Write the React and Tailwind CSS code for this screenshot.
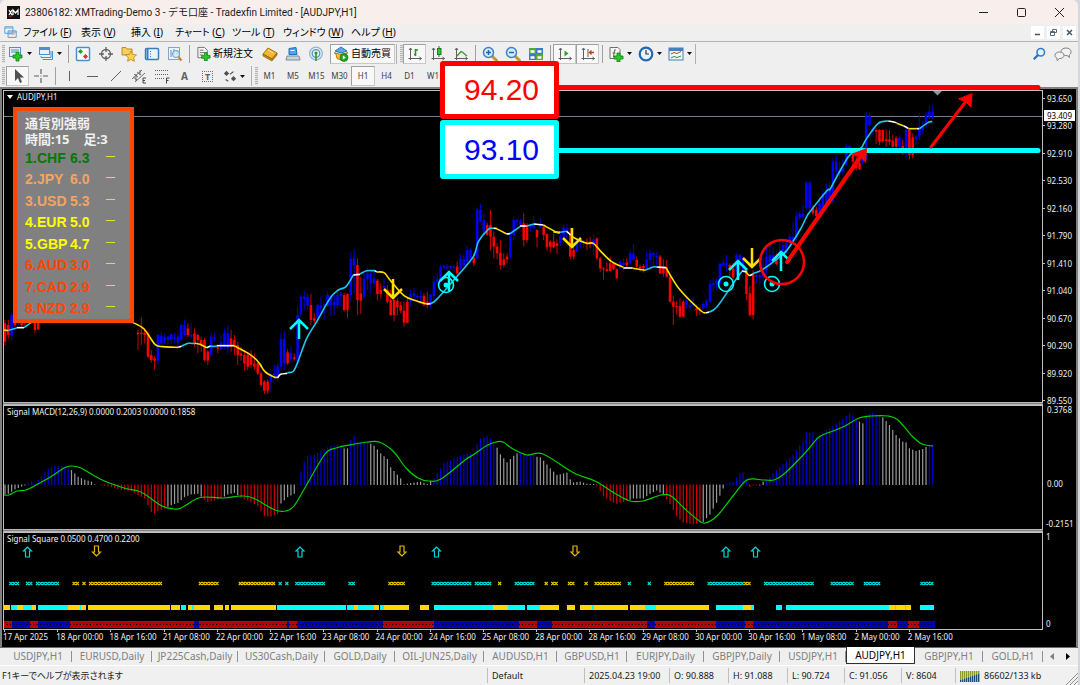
import React from 'react';
import clsx from 'clsx';

const STEP = 3.325;
const barX = (i) => 5 + STEP * i;

// Candles: colour, high, body top, body bottom, low, in thirds of a pixel.
// Each block starts at bar `from`, and `dy` moves it to the top of the price panel.
const CANDLES = [
  { from: 0, dy: 0, bars: 'r 690 700 755 767,r 690 705 735 745,b 670 675 735 752,r 680 690 705 710,b 670 680 700 705,r 680 690 705 712,r 680 690 700 710' },
  { from: 9, dy: 0, bars: 'r 680 690 720 728,r 680 690 718 720' },
  { from: 40, dy: 0, bars: 'r 720 728 733 780,r 682 728 732 765,r 715 728 735 760,r 725 730 800 805,r 780 795 810 818,r 798 805 812 840,b 733 735 812 825,b 725 738 760 765,b 730 740 755 762,b 738 740 750 765,b 730 733 750 762,b 728 742 746 760,b 730 740 757 770,b 700 705 750 755,b 688 705 735 740,r 700 715 735 742,b 698 735 740 745,r 715 730 760 770,r 732 735 750 790,r 740 750 765 785,r 745 750 810 815,r 780 785 812 825,b 730 740 795 800,b 728 742 746 755,r 765 772 776 790,b 735 757 777 780,b 715 730 770 778,b 708 730 775 790,r 720 745 770 785,r 735 750 765 795,r 755 765 795 825,r 770 790 797 812,r 780 795 820 842,r 785 795 830 840,r 780 800 825 835,r 790 820 830 840,r 815 820 850 855' },
  { from: 77, dy: 300, bars: 'r 545 550 585 590,r 570 575 602 612,r 568 575 602 612,b 545 552 575 605,b 525 550 557 570,b 520 530 560 575,b 430 447 530 540,b 422 447 520 540,r 478 487 520 525,b 470 488 508 518,r 490 502 508 512,b 347 375 515 525,b 315 320 372 380,b 303 320 326 360,b 310 320 345 360,r 312 345 390 405,r 370 385 392 400,b 340 345 385 400,b 320 345 355 375,b 340 343 350 390,b 305 315 345 350,b 315 318 348 378,b 310 335 345 375,b 305 315 345 355,b 305 310 318 350,r 308 315 360 365,r 310 312 360 384,b 187 207 315 335,b 178 205 225 310,r 205 225 330 375,r 260 310 332 372,b 250 268 320 325,b 235 250 268 300,b 240 250 280 310,b 245 265 280 285,r 268 272 312 330,r 280 300 312 325,b 265 288 295 305,r 285 300 335 340,r 300 330 375 378,r 325 330 375 395,r 325 332 352 375,r 335 345 362 370,r 335 362 398 410,r 320 335 398 400,b 300 312 335 348,b 295 310 318 335,b 310 318 322 330,b 300 318 322 340,r 310 318 345 350,r 305 335 345 355,b 310 315 345 355,b 258 275 318 330,b 250 268 275 280,b 225 230 270 280,b 225 228 232 240,b 222 230 235 245,b 225 228 235 240,b 225 230 234 245,r 215 230 250 255,b 193 207 235 240,b 193 207 225 232,b 168 180 215 225,b 175 180 205 215,r 190 203 220 228,b 52 60 205 207,b 42 60 95 97,b 68 90 125 135,r 98 105 135 138,r 60 105 140 182,r 125 140 170 205,r 160 170 190 208,r 150 188 225 238,r 190 208 225 232,r 190 200 208 220,b 125 140 200 208,b 80 90 135 152,b 85 90 95 110,b 85 95 110 112,r 70 100 150 170,r 100 108 150 158,b 105 108 112 125,b 78 105 115 118,r 118 120 142 172' },
  { from: 161, dy: 300, bars: 'b 85 105 110 115,r 105 110 135 150,r 130 132 172 182,r 150 155 170 188,r 132 155 172 175,r 148 160 168 192,b 130 138 160 168,b 105 112 140 160,b 102 115 125 155,r 115 130 200 208,r 165 180 200 208,b 145 160 185 187,b 140 150 160 175,b 150 152 158 175,r 145 155 160 180,r 140 155 160 175,b 135 148 165 195,r 142 145 205 210,r 200 205 235 245,r 232 235 238 268,r 215 238 243 245,r 200 220 243 245,r 215 220 238 240,r 235 238 265 268,b 210 215 235 240,b 205 218 225 240,r 205 218 225 235,b 180 190 220 225,b 162 190 210 215,r 200 210 230 235,r 225 230 235 245,r 222 228 235 248,b 183 208 235 240,b 180 188 210 235,b 185 190 195 230,b 185 198 202 230,r 195 200 250 252,r 208 230 250 260,r 210 232 260 262,r 255 260 335 338,r 318 335 350 405,r 332 348 352 375,r 325 348 380 385,r 330 335 380 382,b 325 332 345 355,b 335 345 350 360,b 322 340 345 352,r 345 355 360 378,r 350 358 362 375,b 335 342 355 358,b 328 332 345 355,b 270 283 335 340,b 265 280 285 305,b 265 272 282 300,b 218 222 280 285,b 208 218 225 230,b 195 218 225 245,r 220 225 240 260,r 220 235 262 270,b 190 195 245 255,b 190 195 210 225,b 200 205 240 245,r 235 240 312 330,r 288 310 375 380,r 240 250 375 388,b 245 255 260 278,b 240 255 260 285,b 195 240 260 275,b 165 200 240 250,b 160 195 225 235,b 170 195 205 215,r 190 205 222 225,b 155 185 205 215,b 150 165 190 200,b 155 160 180 190,b 130 140 160 170,b 97 140 155 165,b 65 80 140 150,b 65 72 82 90,b 45 72 80 85' },
  { from: 241, dy: -30, bars: 'b 303 308 385 390,b 303 308 385 400,r 375 385 400 405,r 380 390 408 415,b 355 370 410 412,b 330 340 385 390,b 310 330 370 385,b 305 330 360 365,b 235 245 365 370,b 225 245 272 290,b 245 270 280 298,b 238 265 275 283,b 190 200 255 260,b 195 198 215 225,r 205 220 245 270,r 225 245 265 272,r 230 248 268 270,b 210 220 248 255,b 95 105 238 240,b 98 105 135 142,b 140 145 155 165,r 145 150 155 192,r 148 150 185 195,r 148 150 183 188,r 148 178 183 200,r 150 178 185 195,r 165 182 200 205,r 168 175 200 205,b 165 172 200 205,r 180 198 210 225,b 140 150 210 235,r 145 150 225 238,r 160 172 225 235,b 165 170 178 195,b 100 140 170 180,b 125 140 150 158,b 95 105 130 145,b 78 95 110 118,b 75 95 110 118' },
];

// Moving average: colour followed by its points, in the same units as the candles
const AVERAGE = [
  { dx: 0, dy: 0, runs: 'y 12,720 25,722|c 25,721 50,714|w 50,713 72,713|c 72,713 90,700 110,690|y 398,697 432,717 465,763 490,770 535,772|w 535,772 545,769|c 545,768 565,760 585,761|y 585,760 600,763 620,773|w 620,773 632,768|c 630,769 650,769|w 650,767 702,767|y 702,767 745,790 770,810 785,830' },
  { dx: 780, dy: 300, runs: 'y 0,522 15,545 40,560 53,563|w 53,563 62,553 82,550|c 82,548 100,544 115,512 140,445 170,395 210,325 235,300 258,290 280,255|w 280,255 300,253|c 300,252 320,242 345,242|w 345,242 350,246|y 350,246 372,248 390,270 432,317 470,333 500,342|w 500,342 512,341|c 512,341 530,328 590,260 640,200 655,155 685,118 700,115|w 700,115 710,115|y 708,115 740,132|w 740,132 750,131|c 750,131 780,110|w 780,108 800,108|c 800,108 822,102|w 822,102 850,105|y 850,105 890,127 900,127' },
  { dx: 1620, dy: 300, runs: 'y 40,126 60,127|c 60,127 80,124|w 80,124 92,135|y 92,135 105,145 140,160 160,160 185,187 215,215 250,232|w 250,234 278,234|y 278,235 315,241|c 315,241 340,231 350,231|w 350,231 378,233|y 378,233 418,297 480,360 497,369|w 497,369 507,366|c 507,366 530,352 580,280 605,245|w 605,243 620,245|y 617,245 628,257|w 628,257 638,253|c 636,252 665,240 705,212 740,182' },
  { dx: 2340, dy: -30, runs: 'c 0,530 20,512 60,450 80,410 90,395 140,333 150,328 165,300 205,230 230,212 245,202 260,175 295,130 325,123|w 325,123 350,128|y 350,130 370,137|w 370,137 385,145|y 385,146 410,146|w 410,146 418,146|c 418,146 445,127 457,125' },
];

const LINE_COLORS = { y: '#ffe000', c: '#1cc8f0', w: '#ffffff' };

// MACD histogram: [bar, height in thirds of a pixel], linear in between
const MACD = [
  [0, -30], [1, -28], [3, -15], [5, -6], [6, -3], [7, 6], [8, 12], [9, 3], [11, 27], [13, 50], [15, 58], [18, 55], [20, 45], [22, 25], [24, 16], [26, 10], [27, 2],
  [29, -2], [32, -8], [35, -16], [38, -20], [40, -32], [42, -42], [43, -62], [44, -82], [45, -88], [46, -80], [48, -72], [50, -62], [52, -55], [54, -38], [56, -30],
  [58, -28], [60, -45], [61, -53], [65, -42], [67, -30], [69, -25], [71, -40], [73, -48], [76, -65], [78, -95], [80, -97], [82, -88], [83, -57], [85, -38], [87, -28],
  [88, 3], [89, 40], [90, 70], [91, 88], [93, 90], [96, 108], [98, 118], [101, 120], [102, 110], [103, 110], [104, 135], [105, 148], [106, 130], [109, 130], [111, 118],
  [113, 95], [115, 78], [116, 53], [119, 20], [120, 2], [122, 6], [125, 10], [127, 3], [129, 20], [132, 65], [135, 80], [139, 95], [141, 95], [142, 122], [143, 140],
  [145, 148], [147, 130], [148, 112], [149, 92], [151, 68], [153, 88], [154, 95], [158, 88], [161, 83], [162, 73], [164, 50], [166, 30], [169, 37], [170, 17], [171, 8],
  [173, 10], [175, 4], [177, 3], [178, -5], [180, -35], [182, -50], [184, -58], [187, -50], [189, -42], [192, -42], [194, -28], [196, -18], [198, -30], [200, -58],
  [202, -95], [204, -114], [207, -120], [210, -112], [212, -90], [214, -55], [216, -12], [217, 3], [219, 10], [221, 35], [222, 38], [223, 20], [224, -8], [225, -3],
  [227, -3], [228, 10], [230, 25], [232, 45], [235, 73], [237, 90], [239, 120], [240, 130], [241, 157], [243, 158], [244, 145], [247, 163], [250, 185], [252, 198],
  [254, 215], [255, 208], [257, 190], [258, 185], [259, 210], [261, 217], [264, 203], [266, 180], [268, 150], [270, 130], [271, 128], [272, 110], [274, 102], [276, 108],
  [278, 120], [279, 123],
];

const MACD_RUNS = [
  [6, 'g'], [19, 'b'], [28, 'g'], [48, 'r'], [59, 'g'], [65, 'r'], [70, 'g'], [82, 'r'], [87, 'g'], [101, 'b'], [103, 'g'], [109, 'b'], [128, 'g'], [147, 'b'],
  [154, 'g'], [159, 'b'], [177, 'g'], [187, 'r'], [198, 'g'], [209, 'r'], [216, 'g'], [223, 'b'], [226, 'r'], [228, 'g'], [256, 'b'], [258, 'g'], [263, 'b'],
  [277, 'g'], [279, 'b'],
];
const MACD_COLORS = { g: '#9a9a9a', b: '#0000d8', r: '#d00000' };

const MACD_SIGNAL =
  '4,494 9,494 17,490 26,489 38,483 52,475 64,467 71,465 81,467 100,478 124,487 138,490 146,494 162,505 174,508 181,507 196,498 205,496 224,497 241,495 253,497 275,509 286,510 294,505 306,485 325,453 336,447 355,443 368,441 379,441 393,450 406,467 418,477 429,480 441,478 465,459 473,454 486,445 496,441 503,441 513,448 527,454 543,453 574,472 595,480 616,493 630,500 643,500 661,494 671,495 685,508 698,519 705,522 717,515 733,495 747,479 764,479 774,479 784,473 805,452 819,436 833,430 845,425 859,417 871,415 888,415 898,419 912,435 922,443 933,445';

// Cross marks of the square indicator: [colour, first bar, last bar]
const CROSSES = [
  ['c', 2, 4], ['c', 7, 8], ['c', 10, 16], ['y', 21, 22], ['y', 24, 24], ['y', 26, 47], ['y', 59, 64], ['y', 71, 81], ['c', 83, 83], ['c', 85, 85], ['c', 88, 96],
  ['c', 104, 105], ['y', 116, 120], ['c', 129, 140], ['c', 142, 146], ['y', 149, 149], ['c', 154, 159], ['y', 163, 163], ['y', 165, 166], ['y', 170, 171],
  ['y', 175, 175], ['y', 178, 185], ['c', 188, 188], ['c', 194, 194], ['y', 199, 207], ['c', 212, 222], ['y', 223, 224], ['c', 229, 243], ['c', 249, 255],
  ['c', 259, 263], ['c', 276, 279],
];

const BANDS = [
  ['y', 4, 10], ['c', 11, 17], ['y', 17, 23], ['c', 23, 32], ['y', 32, 36], ['c', 38, 68], ['y', 68, 80], ['c', 80, 81], ['y', 81, 86], ['y', 88, 170],
  ['y', 171, 180], ['c', 181, 186], ['y', 188, 192], ['c', 192, 194], ['y', 194, 210], ['y', 214, 223], ['y', 225, 229], ['y', 231, 276], ['c', 277, 346],
  ['c', 347, 354], ['y', 354, 358], ['c', 358, 374], ['y', 374, 379], ['c', 380, 384], ['y', 384, 409], ['y', 420, 429], ['c', 434, 493], ['y', 493, 508],
  ['c', 508, 525], ['c', 527, 540], ['y', 540, 559], ['y', 567, 575], ['y', 580, 592], ['c', 592, 594], ['y', 594, 628], ['y', 630, 645], ['c', 645, 656],
  ['y', 656, 709], ['c', 716, 743], ['y', 743, 751], ['c', 751, 754], ['c', 776, 782], ['c', 786, 889], ['y', 889, 895], ['c', 895, 896], ['y', 896, 905],
  ['c', 905, 906], ['y', 906, 911], ['c', 920, 934],
];

const RED_SQUARES = [
  [4, 12], [30, 38], [70, 194], [199, 287], [289, 297], [383, 434], [519, 537], [552, 647], [655, 716], [745, 753], [888, 897], [908, 919],
];

const PRICES = ['93.650', '93.280', '92.910', '92.530', '92.160', '91.790', '91.410', '91.040', '90.670', '90.290', '89.920', '89.550'];

const TIMES = [
  '17 Apr 2025', '18 Apr 00:00', '18 Apr 16:00', '21 Apr 08:00', '22 Apr 00:00', '22 Apr 16:00', '23 Apr 08:00', '24 Apr 00:00', '24 Apr 16:00',
  '25 Apr 08:00', '28 Apr 00:00', '28 Apr 16:00', '29 Apr 08:00', '30 Apr 00:00', '30 Apr 16:00', '1 May 08:00', '2 May 00:00', '2 May 16:00',
];

const STRENGTH = [
  { rank: 1, code: 'CHF', value: '6.3', color: 'text-[#007a00]' },
  { rank: 2, code: 'JPY', value: '6.0', color: 'text-[#f4a460]' },
  { rank: 3, code: 'USD', value: '5.3', color: 'text-[#f4a460]' },
  { rank: 4, code: 'EUR', value: '5.0', color: 'text-[#ffff00]' },
  { rank: 5, code: 'GBP', value: '4.7', color: 'text-[#ffff00]' },
  { rank: 6, code: 'AUD', value: '3.0', color: 'text-[#ff4500]' },
  { rank: 7, code: 'CAD', value: '2.9', color: 'text-[#ff4500]' },
  { rank: 8, code: 'NZD', value: '2.9', color: 'text-[#ff4500]' },
];

const MENU = [
  { label: 'ファイル', key: 'F', width: 'w-[58px]' },
  { label: '表示', key: 'V', width: 'w-[50px]' },
  { label: '挿入', key: 'I', width: 'w-[44px]' },
  { label: 'チャート', key: 'C', width: 'w-[57px]' },
  { label: 'ツール', key: 'T', width: 'w-[51px]' },
  { label: 'ウィンドウ', key: 'W', width: 'w-[68px]' },
  { label: 'ヘルプ', key: 'H', width: 'w-[50px]' },
];

const TABS = [
  { name: 'USDJPY,H1', width: 'w-[68px]' },
  { name: 'EURUSD,Daily', width: 'w-[80px]' },
  { name: 'JP225Cash,Daily', width: 'w-[86px]' },
  { name: 'US30Cash,Daily', width: 'w-[87px]' },
  { name: 'GOLD,Daily', width: 'w-[70px]' },
  { name: 'OIL-JUN25,Daily', width: 'w-[89px]' },
  { name: 'AUDUSD,H1', width: 'w-[73px]' },
  { name: 'GBPUSD,H1', width: 'w-[70px]' },
  { name: 'EURJPY,Daily', width: 'w-[77px]' },
  { name: 'GBPJPY,Daily', width: 'w-[76px]' },
  { name: 'USDJPY,H1', width: 'w-[66px]' },
  { name: 'AUDJPY,H1', width: 'w-[69px]', active: true },
  { name: 'GBPJPY,H1', width: 'w-[68px]' },
  { name: 'GOLD,H1', width: 'w-[60px]' },
];

const TIMEFRAMES = ['M1', 'M5', 'M15', 'M30', 'H1', 'H4', 'D1', 'W1', 'MN'];

function macdAt(i) {
  const next = MACD.findIndex(([bar]) => bar >= i);
  if (MACD[next][0] === i) return MACD[next][1];
  const [i0, v0] = MACD[next - 1];
  const [i1, v1] = MACD[next];
  return v0 + ((v1 - v0) * (i - i0)) / (i1 - i0);
}

// Catmull-Rom curve through the points
function smoothPath(list) {
  const pts = list.split(' ').map((p) => p.split(',').map(Number));
  let d = `M${pts[0]}`;
  for (let i = 0; i < pts.length - 1; i += 1) {
    const [p0, p1, p2, p3] = [pts[i - 1] || pts[i], pts[i], pts[i + 1], pts[i + 2] || pts[i + 1]];
    d += `C${p1[0] + (p2[0] - p0[0]) / 6},${p1[1] + (p2[1] - p0[1]) / 6} ${p2[0] - (p3[0] - p1[0]) / 6},${p2[1] - (p3[1] - p1[1]) / 6} ${p2}`;
  }
  return d;
}

/* ---------- toolbar parts ---------- */

function Icon({ children, size = 16 }) {
  return (
    <svg width={size} height={size} viewBox="0 0 16 16" fill="none" className="shrink-0" aria-hidden="true">
      {children}
    </svg>
  );
}

function Caret() {
  return (
    <svg width="5" height="3" viewBox="0 0 5 3" className="shrink-0" aria-hidden="true">
      <path d="M0 0h5L2.5 3z" fill="#111" />
    </svg>
  );
}

function Sep() {
  return <span className="mr-0.5 ml-[3px] h-[18px] w-px shrink-0 bg-[#a0a0a0]" />;
}

function Grip() {
  return <span className="h-[18px] w-[3px] shrink-0 bg-[repeating-linear-gradient(180deg,#b4b4b4_0_1px,#e4e4e4_1px_2px)]" />;
}

function Tool({ label, pressed, caret, children }) {
  return (
    <button
      type="button"
      aria-label={label}
      className={clsx(
        'flex h-5 shrink-0 items-center justify-center',
        caret ? 'w-[30px] gap-[3px]' : 'w-[23px]',
        pressed && 'border border-[#c8c8c8] border-t-[#a0a0a0] border-l-[#a0a0a0] bg-[#f8f8f8]',
      )}
    >
      {children}
      {caret && <Caret />}
    </button>
  );
}

const Plus = ({ x = 8, y = 8 }) => (
  <path d={`M${x + 2} ${y}h3v3h3v3h-3v3h-3v-3h-3v-3h3z`} fill="#2fc52f" stroke="#0b7d0b" strokeWidth=".8" />
);

const Axes = ({ children }) => (
  <Icon>
    <path d="M3.500 2v12M1.500 12.500h13M2 4l1.500-2L5 4M12.500 11l2 1.500-2 1.500" stroke="#606060" />
    {children}
  </Icon>
);

const Lens = ({ minus }) => (
  <Icon>
    <path d="M10 10l4.500 4.500" stroke="#c8962a" strokeWidth="3" strokeLinecap="round" />
    <circle cx="6.500" cy="6.500" r="5" fill="#d5ebfb" stroke="#3a83c8" strokeWidth="1.500" />
    <path d={minus ? 'M4 6.500h5' : 'M4 6.500h5M6.500 4v5'} stroke="#1c66b0" strokeWidth="1.500" />
  </Icon>
);

function TitleBar() {
  return (
    <header className="flex h-6 items-center bg-[#f8efed] text-[#1a1a1a]">
      <svg width="13" height="13" viewBox="0 0 13 13" className="ml-[7px]" aria-hidden="true">
        <rect width="13" height="13" fill="#111" />
        <path d="M2 4l3 5M5 4L2 9M6 9V4l2.500 3L11 4v5" stroke="#fff" fill="none" strokeWidth="1.200" />
        <path d="M2 10.500l4-1" stroke="#e02020" />
      </svg>
      <h1 className="ml-[5px] font-['Roboto','Noto_Sans_CJK_JP',sans-serif] text-[10px] whitespace-nowrap">23806182: XMTrading-Demo 3 - デモ口座 - Tradexfin Limited - [AUDJPY,H1]</h1>
      <div className="ml-auto flex">
        <button type="button" aria-label="最小化" className="flex h-6 w-[38px] items-center justify-center">
          <svg width="9" height="9" stroke="#222"><path d="M0 4.500h9" /></svg>
        </button>
        <button type="button" aria-label="最大化" className="flex h-6 w-[38px] items-center justify-center">
          <svg width="9" height="9" fill="none" stroke="#222"><rect x=".5" y=".5" width="8" height="8" rx="1" /></svg>
        </button>
        <button type="button" aria-label="閉じる" className="flex h-6 w-[38px] items-center justify-center">
          <svg width="9" height="9" stroke="#222"><path d="M0 0l9 9M9 0L0 9" /></svg>
        </button>
      </div>
    </header>
  );
}

function MenuBar() {
  return (
    <nav className="flex h-[18px] items-center border-b border-[#b4b4b4] bg-[#efefef] pl-1">
      <Icon size={13}>
        <path d="M1 1h10v8H1zM5 6h10v8H5z" fill="#eaf4fd" stroke="#5b9bd5" strokeWidth="1.200" />
        <path d="M6.500 11l2-2 2 2 3-2" stroke="#e08030" />
        <path d="M1 2.500h10M5 7.500h10" stroke="#5b9bd5" />
      </Icon>
      <div className="ml-[6px] flex text-[10px] [font-feature-settings:'palt']">
        {MENU.map((item) => (
          <button key={item.key} type="button" className={clsx('text-left whitespace-nowrap', item.width)}>
            {item.label} (<u>{item.key}</u>)
          </button>
        ))}
      </div>
      <div className="mr-0.5 ml-auto flex gap-[3px]">
        <button type="button" aria-label="チャートを最小化" className="flex h-[13px] w-[13px] items-center justify-center bg-white">
          <svg width="7" height="7" stroke="#456"><path d="M1 5.500h5" strokeWidth="1.500" /></svg>
        </button>
        <button type="button" aria-label="チャートを元に戻す" className="flex h-[13px] w-[13px] items-center justify-center bg-white">
          <svg width="7" height="7" fill="none" stroke="#567"><path d="M2.500 2V.5h4v3H5M.5 2.500h4v4h-4zM.5 3.500h4" /></svg>
        </button>
        <button type="button" aria-label="チャートを閉じる" className="flex h-[13px] w-[13px] items-center justify-center bg-white">
          <svg width="7" height="7" stroke="#456"><path d="M1 1l5 5M6 1L1 6" strokeWidth="1.500" /></svg>
        </button>
      </div>
    </nav>
  );
}

function StandardToolbar() {
  return (
    <div className="flex h-[23px] items-center pl-0.5">
      <Grip />
      <Tool label="新規チャート" caret>
        <Icon>
          <rect x="1.500" y="1.500" width="11" height="9" fill="#e4f1fc" stroke="#4d8fcc" />
          <path d="M3 4h8M3 6h5" stroke="#4d8fcc" />
          <Plus x={6} y={6} />
        </Icon>
      </Tool>
      <Tool label="チャートの組表示" caret>
        <Icon>
          <rect x="1.500" y="1.500" width="10" height="7" fill="#e4f1fc" stroke="#4d8fcc" />
          <path d="M2 3h9" stroke="#4d8fcc" strokeWidth="2" />
          <path d="M14.500 5v8.500H4.500M13 5v6.500H3V10" stroke="#4d8fcc" />
        </Icon>
      </Tool>
      <Sep />
      <Tool label="気配値表示">
        <Icon>
          <rect x="1.500" y="1.500" width="13" height="13" rx="1" fill="#fff" stroke="#4d8fcc" strokeWidth="1.500" />
          <path d="M5.500 3l2.500 2.500L5.500 8 3 5.500z" fill="#25a025" />
          <path d="M10.500 8l2.500 2.500-2.500 2.500L8 10.500z" fill="#e03020" />
        </Icon>
      </Tool>
      <Tool label="データウィンドウ">
        <Icon>
          <circle cx="8" cy="8" r="4.500" stroke="#606060" strokeWidth="1.300" />
          <path d="M8 1v5M8 10v5M1 8h5M10 8h5" stroke="#606060" strokeWidth="1.300" />
        </Icon>
      </Tool>
      <Tool label="ナビゲーター">
        <Icon>
          <path d="M1 3V1.500h4L6 3h5v6H1z" fill="#f6cf63" stroke="#c08a20" />
          <path d="M10 5l1.700 3.400 3.800.5-2.800 2.600.7 3.800L10 13.500l-3.400 1.800.7-3.800-2.800-2.600 3.800-.5z" fill="#fbd34a" stroke="#b98010" strokeWidth=".8" />
        </Icon>
      </Tool>
      <Tool label="ターミナル">
        <Icon>
          <rect x="1.500" y="2.500" width="13" height="11" rx="1" fill="#e9f3fc" stroke="#3a7cc0" strokeWidth="1.500" />
          <path d="M3.500 3v10" stroke="#3a7cc0" strokeWidth="2" />
          <path d="M6 5.500h1M6 8h1M6 10.500h1" stroke="#3a7cc0" />
        </Icon>
      </Tool>
      <Tool label="ストラテジーテスター">
        <Icon>
          <rect x="1.500" y="1.500" width="11" height="12" fill="#edf4fb" stroke="#8aa5c0" />
          <path d="M4 4v7M7 3v6M10 4v5" stroke="#4d8fcc" />
          <circle cx="9" cy="8" r="3.500" fill="#d5ebfb" fillOpacity=".7" stroke="#6a9cc8" />
          <path d="M11.500 11l3 3.500" stroke="#c8862a" strokeWidth="2.200" />
        </Icon>
      </Tool>
      <Sep />
      <button type="button" className="flex h-5 w-[66px] shrink-0 items-center gap-[2px] pl-1 text-[10px] whitespace-nowrap">
        <Icon size={15}>
          <path d="M2 1.500h7l3 3v8H2z" fill="#f6f6f6" stroke="#707070" />
          <path d="M4 4.500h4M4 7h5M4 9.500h3" stroke="#707070" />
          <Plus x={7} y={7} />
        </Icon>
        新規注文
      </button>
      <Tool label="メタエディター">
        <Icon>
          <path d="M6 2l9 5-5 6-9-5z" fill="#f2b632" stroke="#a87410" />
          <path d="M1 8v2l9 5 5-6V7l-5 6z" fill="#c98a18" stroke="#8a5a08" strokeWidth=".7" />
          <path d="M6 4l5 3" stroke="#ffe59a" />
        </Icon>
      </Tool>
      <Tool label="ライブ口座">
        <Icon>
          <path d="M4 2.500l7-1 1 7H4z" fill="#4aa6ee" stroke="#1d6fb8" />
          <path d="M5.500 4.500h4" stroke="#fff" />
          <path d="M2 10h12l1 4H1z" fill="#c9d3de" stroke="#7d8b9a" />
        </Icon>
      </Tool>
      <Tool label="シグナル">
        <Icon>
          <circle cx="8" cy="7.500" r="6.300" stroke="#8fb4d8" strokeWidth="1.300" />
          <circle cx="8" cy="7.500" r="3.800" stroke="#5b93c8" strokeWidth="1.300" />
          <circle cx="8" cy="7" r="1.600" fill="#2a9a2a" />
          <path d="M8 8v7" stroke="#2a9a2a" strokeWidth="1.600" />
        </Icon>
      </Tool>
      <button
        type="button"
        className="ml-[3px] flex h-5 w-[65px] shrink-0 items-center gap-[2px] border border-[#c8c8c8] border-t-[#a0a0a0] border-l-[#a0a0a0] bg-[#f8f8f8] pl-0.5 text-[10px] whitespace-nowrap"
      >
        <Icon>
          <path d="M2 5l6-4 6 4-6 2z" fill="#5aaae8" stroke="#2a76b8" />
          <path d="M1 6.500l7 2 7-2-2 1.500-1 4.500-4 1.500-4-1.500L3 8z" fill="#f4c33a" stroke="#b98010" />
          <circle cx="11" cy="11.500" r="4" fill="#22a522" stroke="#0c700c" strokeWidth=".6" />
          <path d="M9.800 9.500v4l3-2z" fill="#fff" />
        </Icon>
        自動売買
      </button>
      <span className="mr-[3px] ml-px h-5 w-px bg-[#b0b0b0]" />
      <Grip />
      <Tool label="バーチャート" pressed>
        <Axes><path d="M8.500 3v7M8.500 8.500H7M8.500 4H11" stroke="#1f9a1f" strokeWidth="1.600" /></Axes>
      </Tool>
      <Tool label="ローソク足">
        <Axes><path d="M9 0v11" stroke="#1f7a1f" /><rect x="7.500" y="2.500" width="3.500" height="6" fill="#35c435" stroke="#1f7a1f" /></Axes>
      </Tool>
      <Tool label="ラインチャート">
        <Axes><path d="M4 10l4-4.500 2 1 4 3.500" stroke="#2aa02a" strokeWidth="1.300" /></Axes>
      </Tool>
      <Sep />
      <Tool label="ズームイン"><Lens /></Tool>
      <Tool label="ズームアウト"><Lens minus /></Tool>
      <Tool label="整列">
        <Icon>
          <rect x="1" y="2" width="7" height="6" fill="#52a832" />
          <rect x="8" y="2" width="7" height="6" fill="#3a78c8" />
          <rect x="1" y="8" width="7" height="6" fill="#3a78c8" />
          <rect x="8" y="8" width="7" height="6" fill="#52a832" />
          <path d="M2.500 5.500h4M9.500 5.500h4M2.500 11.500h4M9.500 11.500h4" stroke="#fff" strokeWidth="2.500" />
        </Icon>
      </Tool>
      <Sep />
      <Tool label="自動スクロール" pressed>
        <Axes><path d="M7.500 4.500v6l4-3z" fill="#2aa52a" /></Axes>
      </Tool>
      <Tool label="チャートシフト" pressed>
        <Axes><path d="M8 3v8" stroke="#606060" /><path d="M14 6.500h-4M11.500 4.500l-2 2 2 2" stroke="#c04010" strokeWidth="1.300" /></Axes>
      </Tool>
      <Sep />
      <Tool label="インディケータ" caret>
        <Icon>
          <path d="M2 1.500h8l2 2v9H2z" fill="#f6f6f6" stroke="#707070" />
          <path d="M8 4H6.500L5.500 11M4.500 7h3" stroke="#606060" />
          <Plus x={7} y={7} />
        </Icon>
      </Tool>
      <Tool label="時間足設定" caret>
        <Icon>
          <circle cx="8" cy="8" r="6.300" fill="#eaf4ff" stroke="#2566b0" strokeWidth="2.200" />
          <path d="M8 4v4h3" stroke="#333" strokeWidth="1.200" />
        </Icon>
      </Tool>
      <Tool label="定型チャート" caret>
        <Icon>
          <rect x="1" y="2" width="14" height="12" fill="#eef6fd" stroke="#4380bd" />
          <path d="M1 3.500h14" stroke="#4380bd" strokeWidth="3" />
          <path d="M3 8l3-1.500 3 1 4-2" stroke="#c04030" />
          <path d="M3 12l3-1.500 3 1 4-1.500" stroke="#2a9a2a" />
        </Icon>
      </Tool>
      <span className="h-5 w-px bg-[#b0b0b0]" />
      <div className="mr-1.5 ml-auto flex items-center gap-2">
        <button type="button" aria-label="検索">
          <Icon size={14}>
            <circle cx="10" cy="6" r="4.300" stroke="#2f7fd0" strokeWidth="1.800" />
            <path d="M7 9l-5 5" stroke="#2f6fc0" strokeWidth="2.500" />
          </Icon>
        </button>
        <button type="button" aria-label="チャット">
          <svg width="18" height="14" viewBox="0 0 18 14" fill="#f2f2f2" stroke="#808080" aria-hidden="true">
            <path d="M12 1c3 0 5 1.500 5 3.800S15.500 8 15 8l.5 2.500L13 8.500c-4 .3-6-1.500-6-3.700S9 1 12 1z" />
            <path d="M5.500 5C8 5 10 6.300 10 8.300s-2 3.200-4.500 3.200L3 13.500v-2.300C1.500 10.500 1 9.500 1 8.300 1 6.300 3 5 5.500 5z" />
          </svg>
        </button>
      </div>
    </div>
  );
}

function LineToolbar() {
  return (
    <div className="flex h-[22px] items-center pl-0.5">
      <Grip />
      <span className="w-px" />
      <Tool label="カーソル" pressed>
        <Icon><path d="M5 1v12l3-3 2 5 2-1-2-4.500h4z" fill="#505050" /></Icon>
      </Tool>
      <Tool label="十字カーソル">
        <Icon><path d="M8 1v5M8 10v5M1 8h5M10 8h5M7.500 8h1" stroke="#606060" strokeWidth="1.200" /></Icon>
      </Tool>
      <Sep />
      <Tool label="垂直線"><Icon><path d="M7.500 3v10" stroke="#606060" /></Icon></Tool>
      <Tool label="水平線"><Icon><path d="M2 8.500h11" stroke="#606060" /></Icon></Tool>
      <Tool label="トレンドライン"><Icon><path d="M3 13L13 3" stroke="#606060" /></Icon></Tool>
      <Tool label="等距離チャネル">
        <Icon><path d="M1 11l10-9M4 14L14 5M3 6l4 3M6 4l4 3M2 9l4 3M9 2v5M5 6v7" stroke="#606060" strokeWidth=".9" /><path d="M15 10h-3v5h3M12 12.500h2" stroke="#444" /></Icon>
      </Tool>
      <Tool label="フィボナッチ">
        <Icon><path d="M1 2.500h14M1 6.500h14M1 10.500h10" stroke="#606060" strokeDasharray="1 1" /><path d="M15.500 10h-3v5.500M12.500 12.500h2" stroke="#444" /></Icon>
      </Tool>
      <button type="button" className="h-5 w-[23px] text-[10px] font-bold text-[#606060]">A</button>
      <button type="button" className="flex h-5 w-[23px] items-center justify-center">
        <span className="h-[11px] w-[11px] border border-dotted border-[#707070] text-[9px] leading-[9px] font-bold text-[#606060]">T</span>
      </button>
      <Tool label="矢印" caret>
        <Icon size={14}>
          <path d="M4 2l3 3-3 3-3-3zM12 8l3 3-3 3-3-3z" fill="#505050" />
          <path d="M3 12l3 2M8 6l4-3" stroke="#505050" strokeWidth="1.300" />
        </Icon>
      </Tool>
      <span className="mr-[3px] ml-0.5 h-5 w-px bg-[#b0b0b0]" />
      <Grip />
      {TIMEFRAMES.map((tf, n) => (
        <button
          key={tf}
          type="button"
          className={clsx(
            'h-5 shrink-0 text-center text-[8px] text-[#404040]',
            n % 3 === 1 ? 'w-6' : 'w-[23px]',
            tf === 'H1' && 'border border-[#c8c8c8] border-t-[#a0a0a0] border-l-[#a0a0a0] bg-[#f8f8f8]',
          )}
        >
          {tf}
        </button>
      ))}
    </div>
  );
}

/* ---------- chart ---------- */

function Candles() {
  return CANDLES.map(({ from, dy, bars }) =>
    bars.split(',').map((bar, n) => {
      const [side, ...values] = bar.split(' ');
      const [high, top, bottom, low] = values.map((v) => 90 + (Number(v) + dy) / 3);
      const x = barX(from + n);
      const color = side === 'r' ? '#ff0000' : '#0000ff';
      return (
        <g key={from + n} fill={color}>
          <rect x={x - 0.5} y={high} width="1" height={low - high} opacity=".8" />
          <rect x={x - 1.25} y={top} width="2.5" height={Math.max(bottom - top, 1)} />
        </g>
      );
    }),
  );
}

function Average() {
  return AVERAGE.map(({ dx, dy, runs }) =>
    runs.split('|').map((run) => {
      const [color, ...points] = run.split(' ');
      const path = points.map((p) => {
        const [x, y] = p.split(',').map(Number);
        return `${(x + dx) / 3},${90 + (y + dy) / 3}`;
      });
      return <path key={`${dx}-${run}`} d={smoothPath(path.join(' '))} fill="none" stroke={LINE_COLORS[color]} strokeWidth="1.600" />;
    }),
  );
}

function SignalArrow({ x, y, down }) {
  return (
    <path
      d={down ? `M${x} ${y - 10}v19M${x - 9} ${y}l9 9 9-9` : `M${x} ${y + 10}v-19M${x - 9} ${y}l9-9 9 9`}
      fill="none"
      stroke={down ? '#ffe000' : '#00ffff'}
      strokeWidth="2.500"
    />
  );
}

function Target({ x, y }) {
  return (
    <g>
      <circle cx={x} cy={y} r="7.500" fill="none" stroke="#00ffff" strokeWidth="1.600" />
      <circle cx={x} cy={y} r="2.500" fill="#00ffff" />
    </g>
  );
}

function StrengthPanel() {
  return (
    <div className="absolute top-4 left-[9px] h-[216px] w-[121px] border-4 border-[#ff4500] bg-[#808080] pt-1 pl-2 font-bold">
      <div className="text-[13px] leading-4 text-[#f0f0f0]">
        <div>通貨別強弱</div>
        <div className="flex gap-[14px]">
          <span>時間:15</span>
          <span>足:3</span>
        </div>
      </div>
      <ul className="font-['Liberation_Sans',sans-serif] text-[14px]">
        {STRENGTH.map((row, n) => (
          <li key={row.code} className={clsx('flex items-center', n % 2 ? 'h-[21px]' : 'h-[22px]', row.color)}>
            <span className="w-3">{row.rank}.</span>
            <span className="w-[33px]">{row.code}</span>
            <span className="w-9">{row.value}</span>
            <span className="mb-1 h-px w-[9px] bg-[#e8e020]" />
          </li>
        ))}
      </ul>
    </div>
  );
}

function Panel({ height, children, axis, originY }) {
  return (
    <div className={clsx('flex', height)}>
      <div className="relative min-w-0 flex-1 border-t border-r border-l border-[#c0c0c0]">
        <svg className="block h-full w-full" aria-hidden="true">
          <g transform={`translate(-4 ${-originY})`}>{children[0]}</g>
        </svg>
        {children[1]}
      </div>
      <div className="relative w-[33px] shrink-0">{axis}</div>
    </div>
  );
}

function Divider() {
  return <div className="mr-[33px] h-[3px] border-y border-[#b8b8b8] bg-[#808080]" />;
}

function PricePanel() {
  const axis = (
    <>
      <ul className="flex h-[315px] flex-col justify-between pt-1">
        {PRICES.map((p) => (
          <li key={p} className="flex items-center leading-[9px]">
            <span className="mr-0.5 h-px w-[2px] bg-[#c0c0c0]" />
            {p}
          </li>
        ))}
      </ul>
      <span className="absolute top-5 left-px w-[31px] bg-white py-px pl-[3px] leading-[9px] text-black">93.409</span>
    </>
  );
  return (
    <Panel height="h-[312px]" originY={91} axis={axis}>
      <g>
        <path d="M4 116.500h1040" stroke="#708090" />
        <path d="M933 91h9l-4.500 4.500z" fill="#8896a8" />
        <Candles />
        <Average />
        <SignalArrow x={299} y={329} />
        <SignalArrow x={449} y={281} />
        <SignalArrow x={738} y={270} />
        <SignalArrow x={781} y={261} />
        <SignalArrow x={393} y={289} down />
        <SignalArrow x={572} y={238} down />
        <SignalArrow x={752} y={258} down />
        <Target x={446} y={285} />
        <Target x={726} y={284} />
        <Target x={772} y={284} />
      </g>
      <>
        <div className="absolute top-0 left-0 flex items-center gap-1 pt-px pl-[3px] leading-[10px]">
          <svg width="6" height="4" aria-hidden="true"><path d="M0 0h6L3 4z" fill="#fff" /></svg>
          AUDJPY,H1
        </div>
        <StrengthPanel />
      </>
    </Panel>
  );
}

function MacdPanel() {
  const axis = (
    <ul className="pl-1 leading-[10px]">
      <li>0.3768</li>
      <li className="absolute top-[74px]">0.00</li>
      <li className="absolute top-[114px] left-[3px]">-0.2151</li>
    </ul>
  );
  const bars = [];
  MACD_RUNS.forEach(([last, color]) => {
    while (bars.length <= last) {
      const i = bars.length;
      const h = macdAt(i) / 3;
      bars.push(<rect key={i} x={barX(i) - 0.6} y={h > 0 ? 484 - h : 483.5} width="1.2" height={Math.abs(h)} fill={MACD_COLORS[color]} />);
    }
  });
  return (
    <Panel height="h-[124px]" originY={405} axis={axis}>
      <g>
        {bars}
        <path d={smoothPath(MACD_SIGNAL)} fill="none" stroke="#00d000" strokeWidth="1.200" />
      </g>
      <div className="absolute top-0 left-[3px] pt-px leading-[10px]">Signal MACD(12,26,9) 0.0000 0.2003 0.0000 0.1858</div>
    </Panel>
  );
}

function BlockArrow({ x, down }) {
  return (
    <path
      d={down ? `M${x} 556l-4-4h2v-6h4v6h2z` : `M${x} 547l-4 4h2v6h4v-6h2z`}
      fill="none"
      stroke={down ? '#e0b800' : '#00d8d8'}
      strokeWidth="1.200"
    />
  );
}

function SquarePanel() {
  const axis = (
    <ul className="pl-[3px] leading-[10px]">
      <li>1</li>
      <li className="absolute top-[87px]">0</li>
    </ul>
  );
  return (
    <Panel height="h-[97px]" originY={533} axis={axis}>
      <g>
        <BlockArrow x={27.5} />
        <BlockArrow x={96.5} down />
        <BlockArrow x={300} />
        <BlockArrow x={402} down />
        <BlockArrow x={436.5} />
        <BlockArrow x={575} down />
        <BlockArrow x={726} />
        <BlockArrow x={755.5} />
        {CROSSES.map(([color, first, last]) => {
          let d = '';
          for (let i = first; i <= last; i += 1) {
            d += `M${barX(i) - 2.3} 582l3 3m0 -3l-3 3`;
          }
          return <path key={first} d={d} stroke={color === 'c' ? '#00e0e0' : '#f0c800'} strokeWidth="1.100" />;
        })}
        {BANDS.map(([color, x0, x1]) => (
          <rect key={x0} x={x0} y="605" width={x1 - x0} height="5" fill={color === 'c' ? '#00ffff' : '#ffd700'} />
        ))}
        <rect x="4" y="621" width="931" height="7" fill="#0000c8" />
        {RED_SQUARES.map(([x0, x1]) => (
          <rect key={x0} x={x0} y="621" width={x1 - x0} height="7" fill="#d00000" />
        ))}
        <path d="M5 622.500h930M5 626.500h930" stroke="#000" strokeOpacity=".35" strokeDasharray="1.325 2" />
        <path d="M6.500 624.500h928" stroke="#000" strokeDasharray="1.325 2" strokeWidth="1.500" />
      </g>
      <div className="absolute top-0 left-[3px] pt-px leading-[10px]">Signal Square 0.0500 0.4700 0.2200</div>
    </Panel>
  );
}

function Chart() {
  return (
    <main className="border-x-2 border-t-2 border-[#808080] bg-black pt-px pl-px text-[8px] text-[#f0f0f0]">
      <PricePanel />
      <Divider />
      <MacdPanel />
      <Divider />
      <SquarePanel />
      <div className="mr-[33px] overflow-hidden border-t border-[#c0c0c0]">
        <ol className="grid h-[17px] w-[958px] grid-cols-[repeat(18,minmax(0,1fr))] leading-[10px]">
          {TIMES.map((t) => (
            <li key={t} className="whitespace-nowrap">
              <span className="ml-px block h-[2px] w-px bg-[#c0c0c0]" />
              {t}
            </li>
          ))}
        </ol>
      </div>
    </main>
  );
}

/* Price targets and trend arrows drawn over the terminal */
function Annotations() {
  return (
    <>
      <svg className="pointer-events-none absolute inset-0 h-full w-full" fill="none" strokeLinecap="round" aria-hidden="true">
        <path d="M556 87.500H1038" stroke="#f00" strokeWidth="5" />
        <path d="M556 150.500H1038" stroke="#0ff" strokeWidth="5" />
        <circle cx="782" cy="262" r="22" stroke="#f00" strokeWidth="2.500" />
        <path d="M787 262L861 156" stroke="#f00" strokeWidth="4" />
        <path d="M867 148l-1 15-5-5-10-4z" fill="#f00" />
        <path d="M931 147L967 100" stroke="#f00" strokeWidth="3" />
        <path d="M972 94l-1 13-5-5-7-3z" fill="#f00" stroke="#f00" />
      </svg>
      <div className="absolute top-[61px] left-[440px] flex h-[58px] w-[119px] items-center justify-center rounded-[3px] border-[5px] border-[#ff0000] bg-white pl-1 font-['Liberation_Sans',sans-serif] text-[30px] leading-none text-[#ff0000]">
        94.20
      </div>
      <div className="absolute top-[120px] left-[440px] flex h-[59px] w-[119px] items-center justify-center rounded-[3px] border-[5px] border-[#00ffff] bg-white pl-1 font-['Liberation_Sans',sans-serif] text-[30px] leading-none text-[#0000ff]">
        93.10
      </div>
    </>
  );
}

function ChartTabs() {
  return (
    <div className="flex h-[18px] items-start border-t border-[#696969] bg-[#efefef] pl-1 text-[10px] text-[#808080]">
      {TABS.map((tab, n) => (
        <button
          key={n}
          type="button"
          className={clsx(
            'shrink-0 text-center whitespace-nowrap',
            tab.width,
            tab.active
              ? '-mt-px h-[17px] border border-t-0 border-[#303030] bg-white leading-[17px] text-black'
              : 'h-4 bg-[linear-gradient(#909090,#909090)] bg-[length:1px_11px] bg-[position:right_center] bg-no-repeat leading-4',
          )}
        >
          {tab.name}
        </button>
      ))}
      <div className="ml-auto flex h-4 items-center gap-3 pr-2">
        <button type="button" aria-label="前のタブ"><svg width="4" height="7" className="block"><path d="M4 0v7L0 3.500z" fill="#808080" /></svg></button>
        <button type="button" aria-label="次のタブ"><svg width="4" height="7" className="block"><path d="M0 0v7l4-3.500z" fill="#000" /></svg></button>
      </div>
    </div>
  );
}

function StatusBar() {
  const cell = 'h-[15px] shrink-0 border-l border-[#c0c0c0] pl-1 leading-[15px] whitespace-nowrap';
  return (
    <footer className="flex h-5 items-center border-t border-white bg-[#f0f0f0] text-[9px] text-[#1a1a1a]">
      <span className="w-[487px] pl-0.5 [font-feature-settings:'palt']">F1キーでヘルプが表示されます</span>
      <span className={clsx(cell, 'w-[97px]')}>Default</span>
      <span className={clsx(cell, 'w-[85px]')}>2025.04.23 19:00</span>
      <span className={clsx(cell, 'w-[59px]')}>O: 90.888</span>
      <span className={clsx(cell, 'w-[59px]')}>H: 91.088</span>
      <span className={clsx(cell, 'w-[57px]')}>L: 90.724</span>
      <span className={clsx(cell, 'w-[57px]')}>C: 91.056</span>
      <span className={clsx(cell, 'w-[54px]')}>V: 8604</span>
      <span className={clsx(cell, 'flex flex-1 items-center gap-1')}>
        <svg width="20" height="12" aria-hidden="true">
          {[0, 1, 2, 3, 4, 5, 6, 7, 8, 9].map((n) => (
            <g key={n}>
              <rect x={n * 2} y="1" width="1.4" height={9 - n * 0.7} fill="#8a9a28" />
              <rect x={n * 2} y={10 - n * 0.7} width="1.4" height={2 + n * 0.7} fill="#1c4a7a" />
            </g>
          ))}
        </svg>
        86602/133 kb
      </span>
      <svg width="12" height="12" className="shrink-0 self-end" stroke="#909090" aria-hidden="true">
        <path d="M0 12L12 0M4 12l8-8M8 12l4-4" />
      </svg>
    </footer>
  );
}

export default function App() {
  return (
    <div className="min-h-screen bg-[#d4d8dc] pr-0.5 font-['Noto_Sans','Noto_Sans_CJK_JP',sans-serif]">
      <div className="relative overflow-hidden rounded-t-md bg-[#efefef]">
        <TitleBar />
        <MenuBar />
        <StandardToolbar />
        <LineToolbar />
        <Chart />
        <ChartTabs />
        <StatusBar />
        <Annotations />
      </div>
    </div>
  );
}
